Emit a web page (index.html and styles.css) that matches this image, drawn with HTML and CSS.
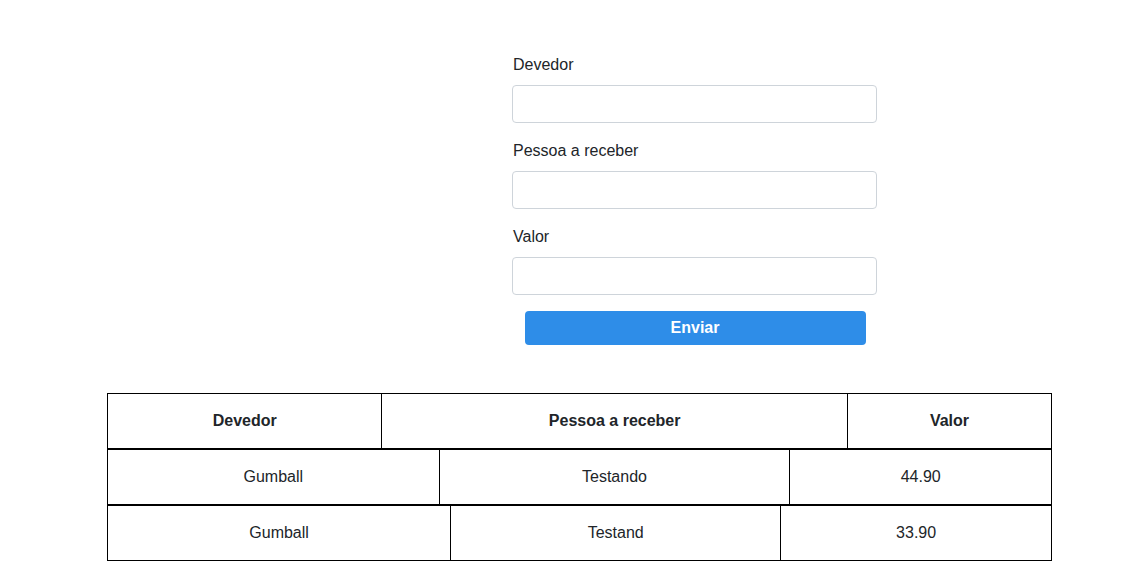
FILE: index.html
```html
<!DOCTYPE html>
<html lang="pt-BR">
<head>
<meta charset="utf-8">
<title>Dívidas</title>
<link rel="stylesheet" href="styles.css">
</head>
<body>
<main class="page">
  <form class="form">
    <label class="label" for="devedor">Devedor</label>
    <input class="input" id="devedor" type="text">
    <label class="label" for="pessoa">Pessoa a receber</label>
    <input class="input" id="pessoa" type="text">
    <label class="label" for="valor">Valor</label>
    <input class="input" id="valor" type="text">
    <button class="button" type="button">Enviar</button>
  </form>
  <section class="list">
    <table class="row">
      <tr><th>Devedor</th><th>Pessoa a receber</th><th>Valor</th></tr>
    </table>
    <table class="row">
      <tr><td>Gumball</td><td>Testando</td><td>44.90</td></tr>
    </table>
    <table class="row">
      <tr><td>Gumball</td><td>Testand</td><td>33.90</td></tr>
    </table>
  </section>
</main>
</body>
</html>
```

FILE: styles.css
```css
* { box-sizing: border-box; }
html, body { margin: 0; padding: 0; background: #fff; }
body {
  font-family: "Liberation Sans", Arial, sans-serif;
  font-size: 16px;
  color: #212529;
}
.page {
  padding-top: 53px;
  display: flex;
  flex-direction: column;
}
.form {
  width: 365px;
  margin-left: 512px;
  display: flex;
  flex-direction: column;
}
.label {
  display: block;
  line-height: 24px;
  padding-left: 1px;
  margin-bottom: 8px;
}
.input {
  display: block;
  width: 100%;
  height: 38px;
  border: 1px solid #ced4da;
  border-radius: 4px;
  margin: 0 0 16px;
  padding: 6px 12px;
  font: inherit;
}
.button {
  display: block;
  align-self: center;
  width: 341px;
  height: 34px;
  margin-left: 1px;
  border: none;
  border-radius: 4px;
  background: #2e8de8;
  color: #fff;
  font: bold 16px "Liberation Sans", Arial, sans-serif;
}
.list {
  margin-top: 48px;
  margin-left: 107px;
  width: 945px;
  display: flex;
  flex-direction: column;
}
.row {
  width: 100%;
  border-collapse: collapse;
  border: 1px solid #000;
}
.row th, .row td {
  border: 1px solid #000;
  text-align: center;
  padding: 17px 16px;
  line-height: 20px;
  color: #212529;
}
.row th { font-weight: bold; }
```
